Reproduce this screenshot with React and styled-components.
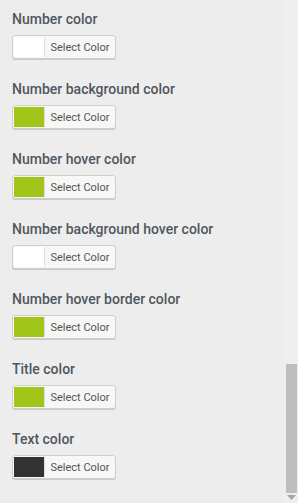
import React from "react";
import styled, { createGlobalStyle } from "styled-components";

const Global = createGlobalStyle`
  html, body { margin: 0; padding: 0; }
  body { background: #ededed; font-family: Roboto, "Noto Sans", sans-serif; }
`;

const Page = styled.div`
  display: flex;
  width: 298px;
  height: 503px;
  overflow: hidden;
  background: #ededed;
`;

const Content = styled.div`
  flex: 1;
  display: flex;
  flex-direction: column;
  gap: 22px;
  padding: 11px 0 0 12px;
`;

const Field = styled.div`
  display: flex;
  flex-direction: column;
  gap: 8px;
`;

const Label = styled.div`
  font-size: 14px;
  font-weight: 500;
  line-height: 16px;
  color: #50575e;
`;

const ColorButton = styled.button`
  display: flex;
  align-items: stretch;
  width: 104px;
  height: 24px;
  padding: 0;
  border: 1px solid #d0d0d0;
  border-radius: 3px;
  background: #f7f7f7;
  box-shadow: 0 1px 0 #c8c8c8;
  overflow: hidden;
  font-family: Roboto, "Noto Sans", sans-serif;
  cursor: pointer;
`;

const Swatch = styled.span`
  width: 30px;
  background: ${(p) => p.$color};
  border-right: 1px solid #dcdcdc;
  margin: 1px 0 1px 1px;
`;

const ButtonText = styled.span`
  flex: 1;
  display: flex;
  align-items: center;
  justify-content: center;
  font-size: 11px;
  color: #555;
`;

const Rail = styled.div`
  width: 14px;
  display: flex;
  flex-direction: column;
  align-items: flex-end;
  background: #efefef;
`;

const Spacer = styled.div`
  flex: 1;
`;

const Thumb = styled.div`
  width: 11px;
  height: 129px;
  margin-right: 1px;
  background: #bebebe;
`;

const Arrow = styled.div`
  height: 8px;
  width: 14px;
  display: flex;
  justify-content: center;
  padding-top: 2px;
  svg { display: block; }
`;

const fields = [
  ["Number color", "#ffffff"],
  ["Number background color", "#a1c519"],
  ["Number hover color", "#a1c519"],
  ["Number background hover color", "#ffffff"],
  ["Number hover border color", "#a1c519"],
  ["Title color", "#a1c519"],
  ["Text color", "#333333"],
];

export default function App() {
  return (
    <>
      <Global />
      <Page>
        <Content>
          {fields.map(([label, color]) => (
            <Field key={label}>
              <Label>{label}</Label>
              <ColorButton type="button">
                <Swatch $color={color} />
                <ButtonText>Select Color</ButtonText>
              </ColorButton>
            </Field>
          ))}
        </Content>
        <Rail>
          <Spacer />
          <Thumb />
          <Arrow>
            <svg width="9" height="5" viewBox="0 0 9 5">
              <path d="M0 0 H9 L4.5 5 Z" fill="#a3a3a3" />
            </svg>
          </Arrow>
        </Rail>
      </Page>
    </>
  );
}
